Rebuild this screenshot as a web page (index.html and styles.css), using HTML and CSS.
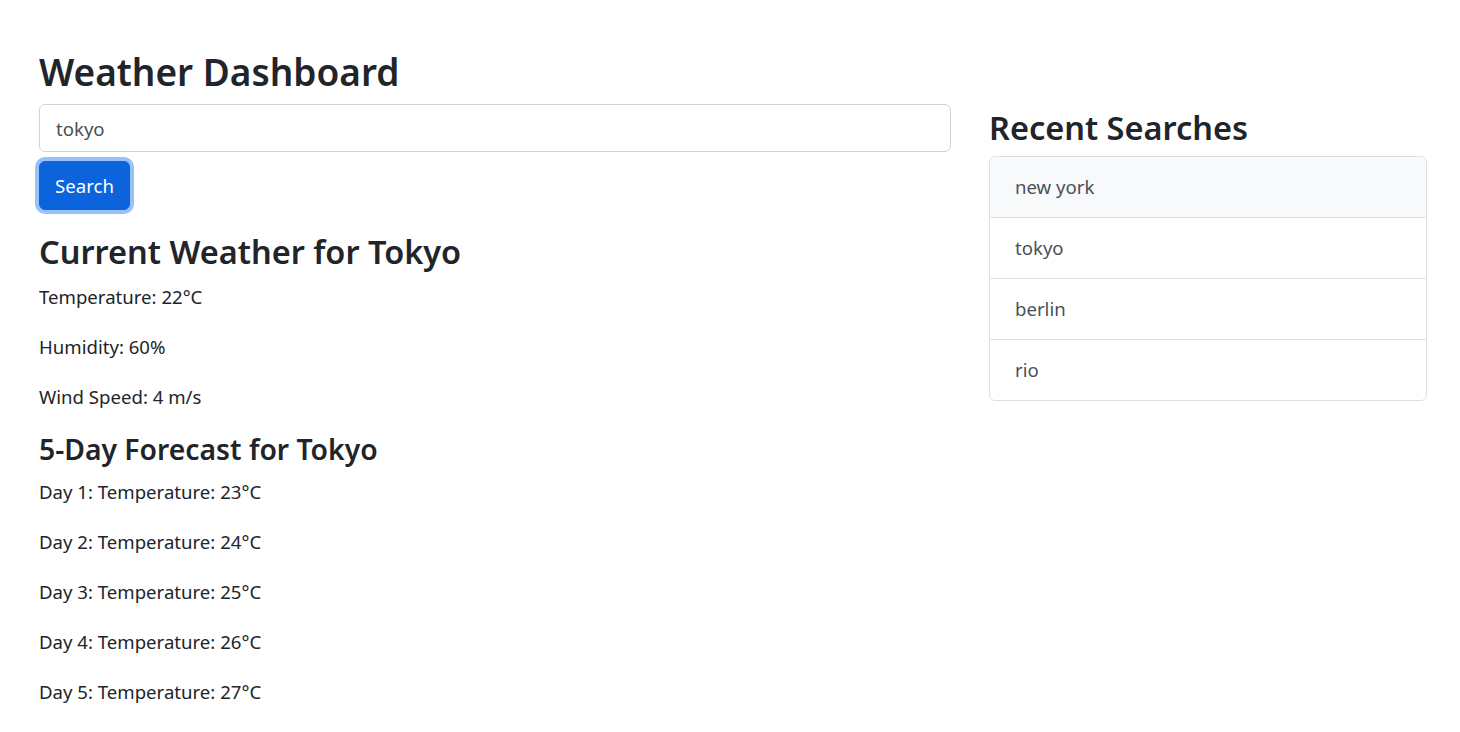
FILE: index.html
```html
<!DOCTYPE html>
<html>
    <head>
        <title>Weather Dashboard</title>
        <link rel="stylesheet" href="styles.css">
    </head>
    <body>
        <div class="page">
            <div class="mainCol">
                <h1>Weather Dashboard</h1>
                <input class="searchInput" type="text" value="tokyo">
                <button class="searchBtn">Search</button>

                <h2 class="currentTitle">Current Weather for Tokyo</h2>
                <p>Temperature: 22°C</p>
                <p>Humidity: 60%</p>
                <p>Wind Speed: 4 m/s</p>

                <h3>5-Day Forecast for Tokyo</h3>
                <p>Day 1: Temperature: 23°C</p>
                <p>Day 2: Temperature: 24°C</p>
                <p>Day 3: Temperature: 25°C</p>
                <p>Day 4: Temperature: 26°C</p>
                <p>Day 5: Temperature: 27°C</p>
            </div>

            <div class="sideCol">
                <h2 class="recentTitle">Recent Searches</h2>
                <ul class="recentList">
                    <li class="active">new york</li>
                    <li>tokyo</li>
                    <li>berlin</li>
                    <li>rio</li>
                </ul>
            </div>
        </div>
    </body>
</html>
```

FILE: styles.css
```css
body{
    margin:0;
    background-color:#fff;
    color:#212529;
    font-family:"Noto Sans", "Open Sans", sans-serif;
    font-size:18.6px;
}
h1,h2,h3,p{
    margin:0;
}
h1,h2,h3{
    font-weight:600;
}
.page{
    display:flex;
    gap:38px;
    padding:50px 33px 20px 39px;
}
.mainCol{
    width:912px;
    display:flex;
    flex-direction:column;
    align-items:flex-start;
}
.sideCol{
    width:438px;
}
h1{
    font-size:37px;
    line-height:44px;
    margin-bottom:10px;
}
.searchInput{
    box-sizing:border-box;
    width:100%;
    height:48px;
    padding:0 16px;
    border:1px solid #ced4da;
    border-radius:6px;
    font-family:inherit;
    font-size:18.6px;
    color:#495057;
    outline:none;
}
.searchBtn{
    margin-top:9px;
    height:49px;
    width:91px;
    border:1px solid #0b64dc;
    border-radius:6px;
    background-color:#0b64dc;
    color:#fff;
    font-family:inherit;
    font-size:18.6px;
    box-shadow:0 0 0 4px rgba(49,132,253,0.5);
}
h2{
    font-size:32.5px;
    line-height:40px;
}
.currentTitle{
    margin-top:22px;
    margin-bottom:10px;
}
h3{
    font-size:28.3px;
    line-height:34px;
    margin-bottom:11px;
}
.mainCol p{
    line-height:30px;
    margin-bottom:20px;
}
.recentTitle{
    margin-top:58px;
    margin-bottom:8px;
}
.recentList{
    list-style:none;
    margin:0;
    padding:0;
    border:1px solid #dfdfdf;
    border-radius:6px;
    overflow:hidden;
}
.recentList li{
    height:60px;
    line-height:60px;
    padding:0 25px;
    font-size:18.6px;
    color:#495057;
}
.recentList li + li{
    border-top:1px solid #dfdfdf;
}
.recentList li.active{
    background-color:#f8f9fa;
}
```
